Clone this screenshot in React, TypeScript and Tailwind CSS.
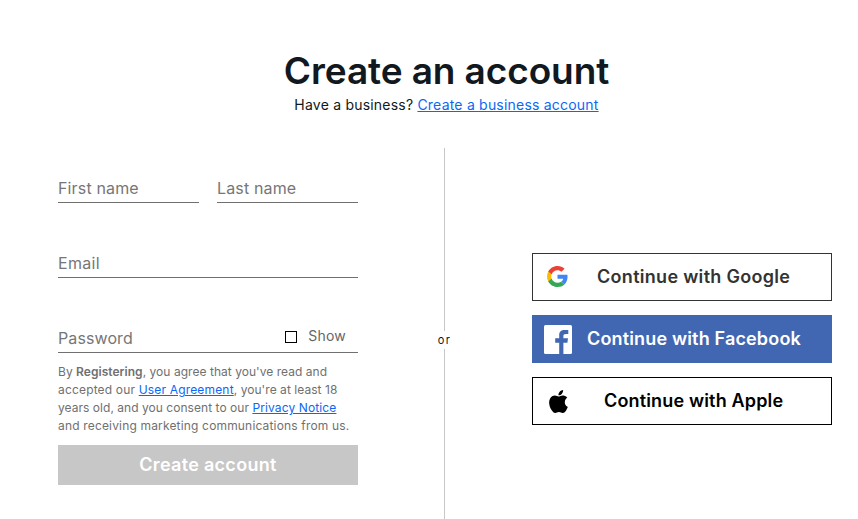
import type { ReactNode } from "react";
import { SiApple } from "react-icons/si";
import { clsx } from "clsx";

interface FieldProps {
    label: string;
    type?: string;
    className?: string;
    children?: ReactNode;
}

function Field({ label, type = "text", className, children }: FieldProps) {
    return (
        <div className="flex h-[29px] min-w-0 flex-1 items-center border-b border-[#707070]">
            <input
                type={type}
                placeholder={label}
                aria-label={label}
                className={clsx("w-full min-w-0 bg-transparent text-base text-[#111820] outline-none placeholder:text-[#767676]", className)}
            />
            {children}
        </div>
    );
}

function GoogleLogo() {
    return (
        <svg viewBox="0 0 48 48" className="mr-0.5 mb-px h-[21px] w-[21px]">
            <path fill="#EA4335" d="M24 9.5c3.54 0 6.71 1.22 9.21 3.6l6.85-6.85C35.9 2.38 30.47 0 24 0 14.62 0 6.51 5.38 2.56 13.22l7.98 6.19C12.43 13.72 17.74 9.5 24 9.5z" />
            <path fill="#4285F4" d="M46.98 24.55c0-1.57-.15-3.09-.38-4.55H24v9.02h12.94c-.58 2.96-2.26 5.48-4.78 7.18l7.73 6c4.51-4.18 7.09-10.36 7.09-17.65z" />
            <path fill="#FBBC05" d="M10.53 28.59c-.48-1.45-.76-2.99-.76-4.59s.27-3.14.76-4.59l-7.98-6.19C.92 16.46 0 20.12 0 24c0 3.88.92 7.54 2.56 10.78l7.97-6.19z" />
            <path fill="#34A853" d="M24 48c6.48 0 11.93-2.13 15.89-5.81l-7.73-6c-2.15 1.45-4.92 2.3-8.16 2.3-6.26 0-11.57-4.22-13.47-9.91l-7.98 6.19C6.51 42.62 14.62 48 24 48z" />
        </svg>
    );
}

function FacebookLogo() {
    return (
        <svg viewBox="0 0 28 29" className="h-[29px] w-7">
            <rect width="28" height="29" rx="1.5" fill="#fff" />
            <path fill="#4267B2" d="M15.2 29V17.8H11.2v-4.5h4V10c0-3.5 2-5 5.2-5h3.9v4h-2.3c-2 0-2.6.8-2.6 2.3v2h4.6l-.6 4.5h-4V29z" />
        </svg>
    );
}

interface SocialButtonProps {
    icon: ReactNode;
    label: string;
    className: string;
    labelClassName: string;
}

function SocialButton({ icon, label, className, labelClassName }: SocialButtonProps) {
    return (
        <button type="button" className={clsx("flex h-12 w-full items-center border pl-[11px] text-lg font-semibold whitespace-nowrap", className)}>
            <span className="flex w-7 shrink-0 items-center justify-center">{icon}</span>
            <span className={labelClassName}>{label}</span>
        </button>
    );
}

export default function App() {
    return (
        <main className="flex h-[519px] w-[858px] flex-col overflow-hidden bg-white font-['Inter',sans-serif] text-[#111820]">
            <header className="flex w-[893px] shrink-0 flex-col items-center pt-[47px] whitespace-nowrap">
                <h1 className="text-[37px] leading-[48px] font-semibold tracking-[-0.1px]">Create an account</h1>
                <p className="text-sm leading-5 tracking-[0.21px]">
                    Have a business?{" "}
                    <a href="#" className="text-[#0968f6] underline">Create a business account</a>
                </p>
            </header>

            <div className="mt-[33px] flex flex-1">
                <form className="ml-[58px] w-[300px] pt-[26px]">
                    <div className="flex gap-[18px]">
                        <Field label="First name" className="tracking-[0.15px]" />
                        <Field label="Last name" className="tracking-[0.15px]" />
                    </div>
                    <div className="mt-[46px] flex">
                        <Field label="Email" className="tracking-[0.3px]" />
                    </div>
                    <div className="mt-[46px] flex">
                        <Field label="Password" type="password" className="tracking-[0.1px]">
                            <label className="flex shrink-0 items-center pr-3 pb-1 text-sm leading-5 text-[#666]">
                                <input type="checkbox" className="mt-0.5 mr-[11px] h-3 w-3 appearance-none border border-black" />
                                <span className="tracking-[0.2px]">Show</span>
                            </label>
                        </Field>
                    </div>
                    <p className="mt-[10px] text-xs leading-[18px] tracking-[0.17px] whitespace-nowrap text-[#707070]">
                        <span className="tracking-[0.04px]">
                            By <b className="font-semibold">Registering</b>, you agree that you've read and
                        </span>
                        <br />
                        accepted our <a href="#" className="text-[#0968f6] underline">User Agreement</a>
                        <span className="tracking-[0.05px]">, you're at least 18</span>
                        <br />
                        <span className="tracking-[0.04px]">years old, and you consent to our </span>
                        <a href="#" className="tracking-[0.12px] text-[#0968f6] underline">Privacy Notice</a>
                        <br />
                        and receiving marketing communications from us.
                    </p>
                    <button type="button" className="mt-[10px] h-10 w-full bg-[#c7c7c7] text-lg font-semibold tracking-[0.3px] text-white">
                        Create account
                    </button>
                </form>

                <div className="ml-[79px] flex w-[15px] flex-col items-center">
                    <div className="h-[183px] w-px bg-[#c7c7c7]" />
                    <span className="h-[18px] text-[11px] leading-[18px] tracking-[1.5px]">or</span>
                    <div className="w-px flex-1 bg-[#c7c7c7]" />
                </div>

                <div className="ml-20 flex w-[300px] flex-col gap-[14px] pt-[105px]">
                    <SocialButton
                        icon={<GoogleLogo />}
                        label="Continue with Google"
                        className="border-[#333] text-[#333]"
                        labelClassName="ml-[25px] tracking-[0.3px]"
                    />
                    <SocialButton
                        icon={<FacebookLogo />}
                        label="Continue with Facebook"
                        className="border-[#4267b2] bg-[#4267b2] text-white"
                        labelClassName="ml-[15px] tracking-[0.16px]"
                    />
                    <SocialButton
                        icon={<SiApple className="h-[23px] w-[23px]" />}
                        label="Continue with Apple"
                        className="border-black text-black"
                        labelClassName="mb-px ml-8 tracking-[0.16px]"
                    />
                </div>
            </div>
        </main>
    );
}
